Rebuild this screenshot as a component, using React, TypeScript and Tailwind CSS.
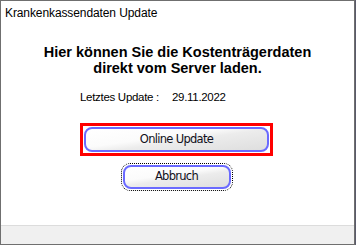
import React from "react";

const btnBg =
  "bg-[linear-gradient(172deg,#ffffff_0%,#fbfbfb_40%,#ececec_55%,#dedede_100%)]";

export default function App() {
  return (
    <div className="w-[356px] h-[245px] bg-[#5a5a6a]">
      <div className="w-[355px] h-[245px] border border-[#6f6f6f] bg-white flex flex-col">
        <div
          className="h-[27px] pl-[4px] pt-[5px] text-[12px] leading-[15px] text-black tracking-[-0.1px]"
          style={{ fontFamily: '"Liberation Sans", Arial, sans-serif' }}
        >
          Krankenkassendaten Update
        </div>
        <div
          className="mt-[16px] text-center font-bold text-[14.5px] leading-[16px] text-black"
          style={{ fontFamily: '"Liberation Sans", Arial, sans-serif' }}
        >
          <div>Hier können Sie die Kostenträgerdaten</div>
          <div>direkt vom Server laden.</div>
        </div>
        <div
          className="mt-[14px] pl-[79px] flex text-[11.5px] leading-[14px] text-black tracking-[-0.3px]"
          style={{ fontFamily: '"Liberation Sans", Arial, sans-serif' }}
        >
          <span>Letztes Update :</span>
          <span className="ml-[13px]">29.11.2022</span>
        </div>
        <div className="mt-[19px] flex justify-center">
          <div className="ml-[-2px] w-[193px] h-[33px] border-[3px] border-[#ff0000] p-[1px]">
            <div
              className={`w-full h-full rounded-[8px] border-2 border-[#6a6aff] ${btnBg} flex items-center justify-center text-[11.5px] text-[#101020]`}
              style={{ fontFamily: '"DejaVu Sans", Tahoma, sans-serif', letterSpacing: "-0.7px" }}
            >
              Online Update
            </div>
          </div>
        </div>
        <div className="mt-[7px] flex justify-center">
          <div className="ml-[-2px] w-[112px] h-[28px] border border-dotted border-black rounded-[9px] p-[1px]">
            <div
              className={`w-full h-full rounded-[8px] border-2 border-[#6a6aff] ${btnBg} flex items-center justify-center text-[11.5px] text-[#101020]`}
              style={{ fontFamily: '"DejaVu Sans", Tahoma, sans-serif', letterSpacing: "-0.7px" }}
            >
              Abbruch
            </div>
          </div>
        </div>
        <div className="flex-1" />
        <div className="h-[19px] bg-[#f0f0f0] border-t border-[#dcdcdc]" />
      </div>
    </div>
  );
}
